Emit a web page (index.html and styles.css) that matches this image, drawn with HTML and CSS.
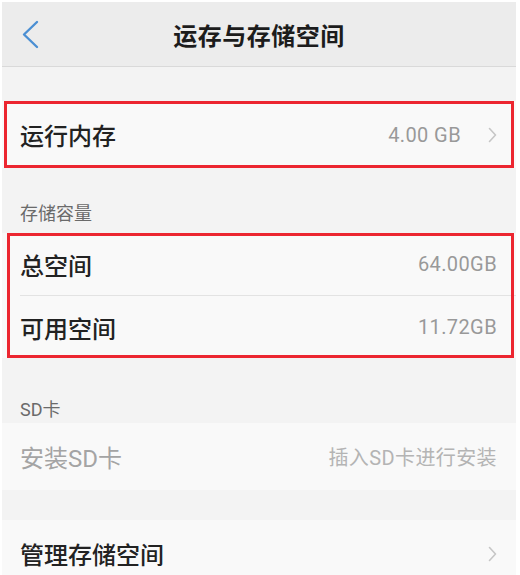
FILE: index.html
```html
<!DOCTYPE html>
<html lang="zh-CN">
    <head>
        <meta charset="UTF-8">
        <meta name="viewport" content="width=device-width, initial-scale=1.0">
        <title>运存与存储空间</title>
        <link rel="stylesheet" href="styles.css">
    </head>
    <body>
        <div class="screen">
            <header class="topbar">
                <a class="back" href="#">
                    <svg width="20" height="30" viewBox="0 0 20 30">
                        <polyline points="16,2 3,14.5 16,27" fill="none" stroke="#4b8fd3" stroke-width="2.4" stroke-linecap="round" stroke-linejoin="round"/>
                    </svg>
                </a>
                <h1 class="title">运存与存储空间</h1>
                <span></span>
            </header>

            <div class="gap gap-top"></div>

            <div class="group marked">
                <div class="row">
                    <span class="name">运行内存</span>
                    <span class="value">4.00 GB</span>
                    <svg class="chevron" width="9" height="16" viewBox="0 0 9 16">
                        <polyline points="1.5,1.5 7.5,8 1.5,14.5" fill="none" stroke="#c6c6c6" stroke-width="1.6" stroke-linecap="round" stroke-linejoin="round"/>
                    </svg>
                </div>
            </div>

            <div class="section-label">存储容量</div>

            <div class="group marked marked-inset">
                <div class="row">
                    <span class="name">总空间</span>
                    <span class="value">64.00GB</span>
                </div>
                <div class="row">
                    <span class="name">可用空间</span>
                    <span class="value">11.72GB</span>
                </div>
            </div>

            <div class="section-label section-label-low">SD卡</div>

            <div class="group">
                <div class="row disabled">
                    <span class="name">安装SD卡</span>
                    <span class="value">插入SD卡进行安装</span>
                </div>
            </div>

            <div class="gap"></div>

            <div class="group">
                <div class="row">
                    <span class="name">管理存储空间</span>
                    <svg class="chevron" width="9" height="16" viewBox="0 0 9 16">
                        <polyline points="1.5,1.5 7.5,8 1.5,14.5" fill="none" stroke="#c6c6c6" stroke-width="1.6" stroke-linecap="round" stroke-linejoin="round"/>
                    </svg>
                </div>
            </div>
        </div>
    </body>
</html>
```

FILE: styles.css
```css
body {
    margin: 0;
    padding: 2px 0 0 2px;
    background-color: #fff;
    font-family: Roboto, "Noto Sans CJK SC", sans-serif;
    color: #222;
    overflow: hidden;
}
.screen {
    width: 514px;
    min-height: 600px;
    background-color: #f3f3f3;
}
.topbar {
    display: grid;
    grid-template-columns: 1fr auto 1fr;
    align-items: center;
    height: 64px;
    background-color: #ececec;
    border-bottom: 1px solid #d9d9d9;
}
.back {
    display: flex;
    align-items: center;
    padding-left: 19px;
    padding-top: 2px;
}
.title {
    margin: 0;
    font-size: 24px;
    font-weight: bold;
    color: #1c1c1c;
    letter-spacing: 0.5px;
}
.gap {
    height: 30px;
}
.gap-top {
    height: 34px;
}
.group {
    position: relative;
    background-color: #f9f9f9;
}
.marked::after {
    content: "";
    position: absolute;
    top: 0;
    bottom: 0;
    left: 2px;
    right: 2px;
    border: 3px solid #ec2630;
    pointer-events: none;
}
.marked-inset::after {
    left: 5px;
}
.row {
    display: flex;
    align-items: center;
    height: 67px;
    padding: 0 19px 0 18px;
}
.marked-inset .row {
    height: 62px;
}
.marked-inset .row + .row {
    border-top: 1px solid #e3e3e3;
    margin-left: 18px;
    padding-left: 0;
}
.name {
    flex: 1;
    font-size: 24px;
    font-weight: 500;
}
.value {
    font-size: 20px;
    color: #999;
    letter-spacing: 0.4px;
}
.chevron {
    margin-left: 27px;
}
.disabled .name {
    color: #a4a4a4;
    font-weight: 400;
}
.disabled .value {
    color: #b4b4b4;
}
.section-label {
    height: 65px;
    box-sizing: border-box;
    display: flex;
    align-items: flex-end;
    padding: 0 0 8px 18px;
    font-size: 18px;
    color: #6a6a6a;
}
.section-label-low {
    padding-bottom: 2px;
}
```
